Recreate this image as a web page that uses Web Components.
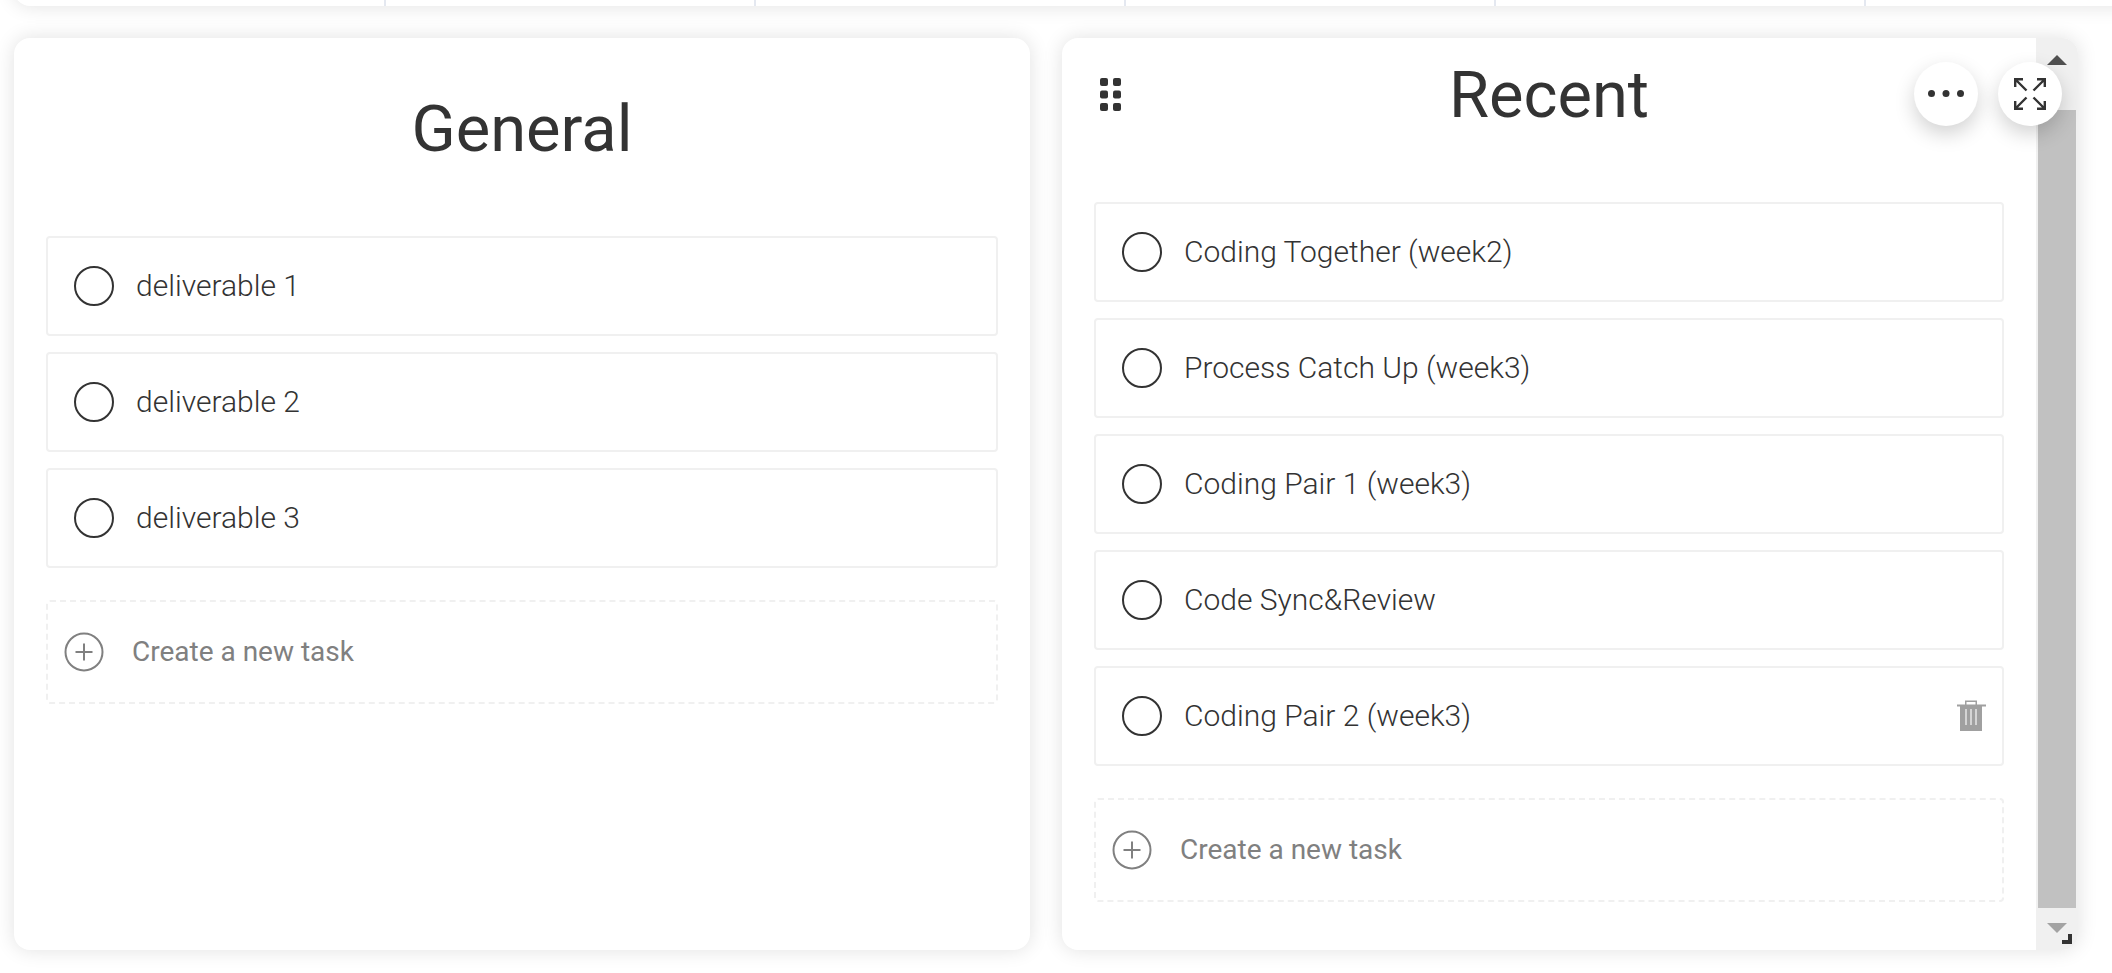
<!DOCTYPE html>
<html lang="en">
<head>
<meta charset="utf-8">
<title>Task board</title>
<style>
body { margin: 0; background: #fff; font-family: Roboto, "Liberation Sans", sans-serif; color: #333; }
</style>
</head>
<body>
<task-board>
  <column-strip slot="top"></column-strip>
  <task-list heading="General">
    <task-item>deliverable 1</task-item>
    <task-item>deliverable 2</task-item>
    <task-item>deliverable 3</task-item>
  </task-list>
  <task-list heading="Recent" active>
    <task-item>Coding Together (week2)</task-item>
    <task-item>Process Catch Up (week3)</task-item>
    <task-item>Coding Pair 1 (week3)</task-item>
    <task-item>Code Sync&amp;Review</task-item>
    <task-item removable>Coding Pair 2 (week3)</task-item>
  </task-list>
</task-board>
<script>
function define(name, render, after) {
  customElements.define(name, class extends HTMLElement {
    connectedCallback() {
      if (this.shadowRoot) return;
      const t = document.createElement('template');
      t.innerHTML = render(this);
      this.attachShadow({ mode: 'open' }).append(t.content.cloneNode(true));
      if (after) after(this);
    }
  });
}

define('task-board', () => `
  <style>
    :host { display: grid; grid-template-rows: 6px minmax(0, 1fr); gap: 32px; height: 100vh; box-sizing: border-box; padding: 0 34px 23px 14px; overflow: hidden; }
    .lists { display: grid; grid-template-columns: repeat(2, minmax(0, 1fr)); gap: 32px; min-height: 0; }
  </style>
  <slot name="top"></slot>
  <div class="lists"><slot></slot></div>`);

/* Lower edge of the wide card above the lists; it runs on past the right side of the window. */
define('column-strip', () => `
  <style>
    :host { display: flex; align-items: flex-end; margin-right: -64px; }
    div { flex: 1; display: flex; height: 80px; background: #fff; border-radius: 16px; box-shadow: 0 0 20px rgba(0,0,0,.12); overflow: hidden; }
    span { flex: none; box-sizing: border-box; width: 370px; border-right: 2px solid #e4e8f0; }
    span:first-child { width: 372px; }
  </style>
  <div><span></span><span></span><span></span><span></span><span></span></div>`);

define('task-item', el => `
  <style>
    :host { display: flex; align-items: center; box-sizing: border-box; height: 100px; padding: 0 14px 0 26px; border: 2px solid #f0f0f0; border-radius: 4px; }
    label { flex: 1; display: flex; align-items: center; gap: 22px; font-size: 30px; line-height: 40px; font-weight: 300; }
    input { appearance: none; flex: none; width: 40px; height: 40px; margin: 0; border: 2px solid #333; border-radius: 50%; }
    input:checked { background: #333; }
    button { display: flex; margin: 0; padding: 0; border: 0; background: none; }
  </style>
  <label><input type="checkbox"><span><slot></slot></span></label>
  ${el.hasAttribute('removable') ? `
  <button aria-label="Delete task">
    <svg width="32" height="32" viewBox="0 0 32 32">
      <path fill="#a0a0a0" d="M1 4.500H9V.500H21V4.500H30V6.500H26V31H4V6.500H1ZM10.500 4.500H19.500V2H10.500Z" fill-rule="evenodd"/>
      <path stroke="#d4d4d4" stroke-width="2" d="M10 9V25M15 9V25M20 9V25"/>
    </svg>
  </button>` : ''}`);

define('scroll-rail', () => `
  <style>
    :host { display: flex; flex-direction: column; width: 42px; box-sizing: border-box; padding: 0 2px; background: #f0f0f0; }
    button { display: flex; justify-content: center; margin: 0; border: 0; background: none; }
    .up { height: 72px; padding: 17px 0 0; }
    .down { height: 42px; padding: 15px 0 0; }
    .thumb { flex: 1; background: #c1c1c1; }
  </style>
  <button class="up" aria-label="Scroll up"><svg width="20" height="10"><path fill="#505050" d="M0 10L10 0L20 10Z"/></svg></button>
  <div class="thumb"></div>
  <button class="down" aria-label="Scroll down"><svg width="20" height="10"><path fill="#a3a3a3" d="M0 0H20L10 10Z"/></svg></button>`);

define('round-button', el => `
  <style>
    :host { display: block; }
    button { display: grid; place-items: center; width: 64px; height: 64px; margin: 0; padding: 0; border: 0; border-radius: 50%; background: #fff; color: #333; box-shadow: 0 8px 20px rgba(0,0,0,.18); }
  </style>
  <button aria-label="${el.getAttribute('label')}"><slot></slot></button>`);

define('task-list', el => `
  <style>
    :host { display: flex; position: relative; min-width: 0; min-height: 0; }
    section { flex: 1; display: flex; min-width: 0; background: #fff; border-radius: 16px; overflow: hidden; box-shadow: 0 0 20px rgba(0,0,0,.12); }
    .body { flex: 1; min-width: 0; overflow: hidden; padding: 0 32px; }
    h2 { margin: 51px 0 67px; text-align: center; font-size: 65px; line-height: 80px; font-weight: 400; }
    .items { display: grid; gap: 16px; }
    .create { display: flex; align-items: center; gap: 28px; box-sizing: border-box; width: 100%; height: 104px; margin: 32px 0 48px; padding: 0 16px; border: 2px dashed #f0f0f0; border-radius: 4px; background: none; color: #808080; font: 400 28px/40px Roboto, "Liberation Sans", sans-serif; }
    .create svg { flex: none; }
    .grip { position: absolute; left: 38px; top: 40px; display: flex; margin: 0; padding: 0; border: 0; background: none; }
    .tools { position: absolute; right: 16px; top: 24px; display: flex; gap: 20px; }
    .corner { position: absolute; right: 6px; bottom: 6px; width: 10px; height: 10px; box-sizing: border-box; border: solid #333; border-width: 0 4px 4px 0; }
  </style>
  <section>
    <div class="body">
      <h2>${el.getAttribute('heading')}</h2>
      <div class="items"><slot></slot></div>
      <button class="create">
        <svg width="40" height="40" viewBox="0 0 40 40" fill="none" stroke="#808080" stroke-width="2"><circle cx="20" cy="20" r="18.500"/><path d="M11.500 20H28.500M20 11.500V28.500"/></svg>
        <span>Create a new task</span>
      </button>
    </div>
    ${el.hasAttribute('active') ? '<scroll-rail></scroll-rail>' : ''}
  </section>
  ${el.hasAttribute('active') ? `
  <button class="grip" aria-label="Move list">
    <svg width="21" height="33" fill="#333"><rect width="8" height="8" rx="2"/><rect x="13" width="8" height="8" rx="2"/><rect y="12.500" width="8" height="8" rx="2"/><rect x="13" y="12.500" width="8" height="8" rx="2"/><rect y="25" width="8" height="8" rx="2"/><rect x="13" y="25" width="8" height="8" rx="2"/></svg>
  </button>
  <div class="tools">
    <round-button label="More options"><svg width="36" height="8" fill="#333"><circle cx="3.500" cy="3.500" r="3.500"/><circle cx="18" cy="3.500" r="3.500"/><circle cx="32.500" cy="3.500" r="3.500"/></svg></round-button>
    <round-button label="Full screen"><svg width="32" height="32" fill="none" stroke="#333" stroke-width="2.400"><path d="M12.500 12.500L1.500 1.500M1.200 9V1.200H9M19.500 12.500L30.500 1.500M23 1.200H30.800V9M12.500 19.500L1.500 30.500M1.200 23V30.800H9M19.500 19.500L30.500 30.500M23 30.800H30.800V23"/></svg></round-button>
  </div>
  <span class="corner"></span>` : ''}`,
  el => {
    /* The active list is shown scrolled to its end. */
    if (el.hasAttribute('active')) {
      const body = el.shadowRoot.querySelector('.body');
      requestAnimationFrame(() => { body.scrollTop = body.scrollHeight; });
    }
  });
</script>
</body>
</html>
